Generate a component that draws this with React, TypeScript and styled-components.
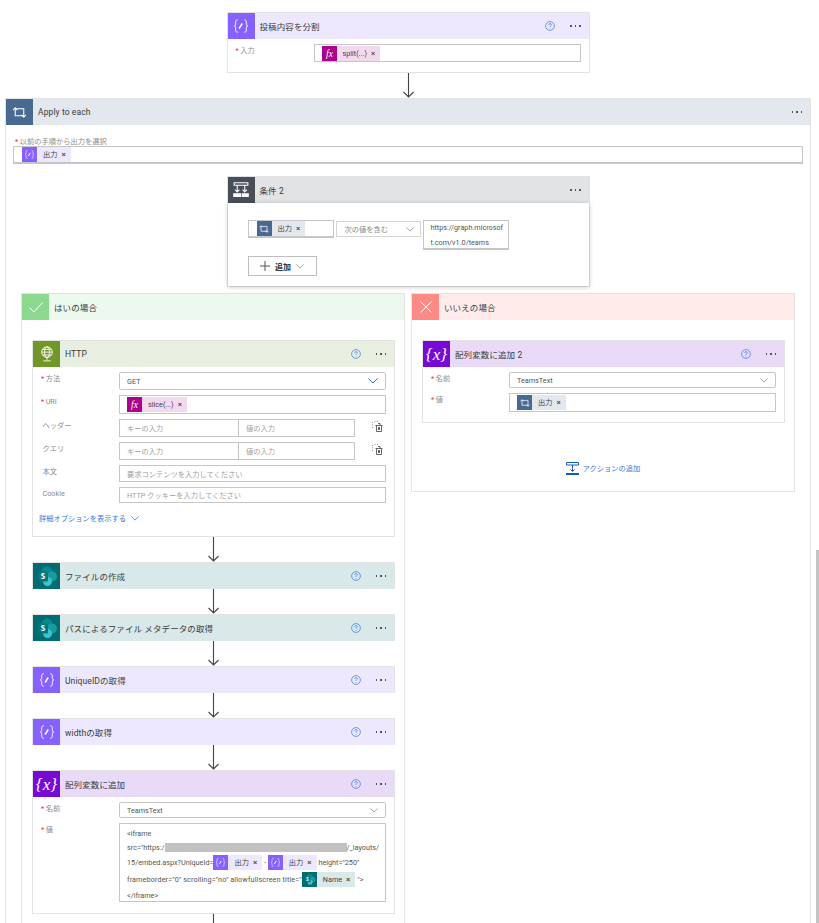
import React from "react";
import styled, { createGlobalStyle } from "styled-components";

const tones = {
  variable: { icon: "#8661ff", head: "#ede8fd" },
  loop: { icon: "#486991", head: "#e3e8ef" },
  condition: { icon: "#484f58", head: "#e2e3e4" },
  http: { icon: "#709727", head: "#e9efe0" },
  sharepoint: { icon: "#036c70", head: "#d9e8e8" },
  append: { icon: "#770bd6", head: "#e9dbf7" },
  yes: { icon: "#8ad98f", head: "#edf8ee" },
  no: { icon: "#fd8a84", head: "#ffecea" },
  fx: { icon: "#ad008c", head: "#f3d9ee" },
};
type Tone = keyof typeof tones;

const GlobalStyle = createGlobalStyle`
  html, body {
    margin: 0;
    background: #fff;
  }
  body {
    font-family: Roboto, "Noto Sans CJK JP", sans-serif;
    color: #444;
  }
`;

const Page = styled.div`
  position: relative;
  width: 819px;
  height: 923px;
  overflow: hidden;
  box-sizing: border-box;
  padding: 12px 8px 0 5px;
  filter: blur(0.35px);
`;

const Scrollbar = styled.div`
  position: absolute;
  top: 550px;
  right: 0;
  width: 3px;
  height: 373px;
  background: #c4c4c4;
`;

const Flow = styled.div`
  display: flex;
  flex-direction: column;
  align-items: center;
`;

const CardBox = styled.section<{ $wide?: boolean; $flat?: boolean }>`
  box-sizing: border-box;
  width: ${(p) => (p.$wide ? "806px" : "363px")};
  background: #fff;
  border: 1px solid #e3e3e3;
  border-bottom-width: ${(p) => (p.$flat ? "0" : "1px")};
`;

const CardHead = styled.header<{ $tone: Tone }>`
  display: flex;
  align-items: center;
  height: 26px;
  background: ${(p) => tones[p.$tone].head};
  color: #3c3c3c;
  font-size: 8.5px;
  letter-spacing: 0.1px;
`;

const IconTile = styled.div<{ $tone: Tone }>`
  display: flex;
  align-items: center;
  justify-content: center;
  flex: none;
  width: 27px;
  height: 100%;
  background: ${(p) => tones[p.$tone].icon};
  margin-right: 5px;
`;

const CardTitle = styled.span`
  flex: 1;
`;

const HelpWrap = styled.span`
  display: flex;
  margin-right: 15px;
`;

const Dots = styled.span`
  display: flex;
  gap: 3px;
  margin-right: 8px;
  i {
    width: 1.5px;
    height: 1.5px;
    background: #555;
  }
`;

const CardBody = styled.div<{ $bottom?: number }>`
  display: flex;
  flex-direction: column;
  gap: 5px;
  padding: 5px 8px ${(p) => p.$bottom ?? 10}px 8px;
`;

const Row = styled.div`
  display: grid;
  grid-template-columns: 78px minmax(0, 1fr);
  align-items: start;
`;

const Label = styled.div<{ $required?: boolean }>`
  font-size: 7.25px;
  color: #8a8a8a;
  line-height: 12px;
  padding-top: 1px;
  &::before {
    content: "${(p) => (p.$required ? "*" : "")}";
    color: #e0393e;
    margin-right: 1.5px;
  }
`;

const Field = styled.div<{ $h: number; $round?: boolean }>`
  box-sizing: border-box;
  display: flex;
  align-items: center;
  height: ${(p) => p.$h}px;
  padding: 0 7px;
  border: 1px solid #c6c6c6;
  border-radius: ${(p) => (p.$round ? "2px" : "0")};
  font-size: 7.25px;
  color: #555;
  justify-content: space-between;
`;

const TokenField = styled(Field)`
  justify-content: flex-start;
`;

const Placeholder = styled.span`
  color: #a0a0a0;
  font-size: 7.25px;
`;

const KeyValue = styled.div`
  display: grid;
  grid-template-columns: 236px 1fr;
  align-items: center;
`;

const KeyValueInputs = styled.div`
  box-sizing: border-box;
  display: grid;
  grid-template-columns: 118px 118px;
  height: 18px;
  border: 1px solid #c6c6c6;
`;

const KeyValueCell = styled.div`
  display: flex;
  align-items: center;
  padding-left: 7px;
  & + & {
    border-left: 1px solid #c6c6c6;
  }
`;

const DeleteWrap = styled.span`
  display: flex;
  justify-content: flex-end;
  padding-right: 3px;
  margin-top: -3px;
`;

const AdvancedLink = styled.div`
  display: flex;
  align-items: center;
  gap: 5px;
  margin-top: 5px;
  font-size: 7.25px;
  line-height: 11px;
  color: #3b79d8;
  margin-left: -2px;
`;

const TokenBox = styled.span<{ $tone: Tone }>`
  display: inline-flex;
  flex: none;
  align-items: center;
  height: 15px;
  background: ${(p) => tones[p.$tone].head};
  color: #444;
  font-size: 7.25px;
  line-height: 15px;
  letter-spacing: 0;
`;

const TokenIcon = styled.span<{ $tone: Tone }>`
  display: flex;
  align-items: center;
  justify-content: center;
  width: 15px;
  height: 15px;
  background: ${(p) => tones[p.$tone].icon};
  margin-right: 6px;
`;

const TokenClose = styled.span`
  margin: 0 5px 0 4px;
  font-size: 8px;
  font-weight: 700;
  color: #555;
`;

const ArrowBox = styled.div<{ $h: number }>`
  display: flex;
  flex: none;
  height: ${(p) => p.$h}px;
`;

const LoopBody = styled.div`
  display: flex;
  flex-direction: column;
  align-items: center;
  padding: 14px 7px 0;
`;

const LoopField = styled.div`
  align-self: stretch;
  margin-bottom: 12px;
`;

const LoopLabel = styled(Label)`
  line-height: 6px;
  padding: 0 0 0 2px;
  margin-bottom: 1px;
`;

const LoopInput = styled(TokenField)`
  padding: 0 8px;
  border-bottom-width: 2px;
`;

const ConditionBody = styled.div`
  position: relative;
  padding: 17px 20px 10px;
  box-shadow: 0 1px 5px rgba(0, 0, 0, 0.22);
`;

const ConditionRow = styled.div`
  display: flex;
  gap: 2px;
  align-items: flex-start;
`;

const ConditionToken = styled(TokenField)`
  width: 86px;
  padding: 0 8px;
  border-bottom-width: 2px;
`;

const Operator = styled.div`
  box-sizing: border-box;
  display: flex;
  align-items: center;
  justify-content: space-between;
  width: 85px;
  height: 16px;
  margin-top: 1px;
  padding: 0 6px 0 8px;
  border: 1px solid #d4d4d4;
  font-size: 7.25px;
  color: #888;
`;

const ValueBox = styled.div`
  box-sizing: border-box;
  width: 86px;
  height: 30px;
  padding: 0 6px 0 7px;
  border: 1px solid #c6c6c6;
  border-bottom-width: 2px;
  font-size: 7.25px;
  line-height: 14.5px;
  color: #555;
  white-space: nowrap;
`;

const AddButton = styled.button`
  display: flex;
  align-items: center;
  justify-content: center;
  box-sizing: border-box;
  gap: 5px;
  width: 69px;
  height: 20px;
  margin-top: 6px;
  padding: 0;
  background: #fff;
  border: 1px solid #bdbdbd;
  font-family: inherit;
  font-size: 8px;
  font-weight: 700;
  color: #333;
`;

const Branches = styled.div`
  display: grid;
  grid-template-columns: 384px 384px;
  gap: 6px;
  align-self: stretch;
  margin: 6px 8px 0;
  align-items: start;
`;

const Branch = styled.section`
  box-sizing: border-box;
  border: 1px solid #e3e3e3;
`;

const BranchContent = styled(Flow)`
  padding: 20px 9px 0 10px;
`;

const AddAction = styled.div`
  display: flex;
  align-items: center;
  justify-content: center;
  gap: 4px;
  height: 68px;
  box-sizing: border-box;
  padding-top: 22px;
  font-size: 7.25px;
  color: #3b79d8;
`;

const MultiField = styled.div`
  box-sizing: border-box;
  height: 79px;
  padding: 2px 7px;
  border: 1px solid #c6c6c6;
  font-size: 7.25px;
  color: #555;
`;

const CodeLine = styled.div<{ $h: number; $track?: number }>`
  display: flex;
  align-items: center;
  height: ${(p) => p.$h}px;
  letter-spacing: ${(p) => p.$track ?? 0}px;
  white-space: nowrap;
`;

const Redacted = styled.span`
  width: 182px;
  height: 9px;
  background: #c2c2c2;
  flex: none;
`;

const Variable = ({ size = 20 }: { size?: number }) => (
  <svg width={size} height={size} viewBox="0 0 32 32" fill="none" stroke="#fff" strokeWidth="1.4">
    <path d="M11 6c-2.500 0-3.500 1-3.500 3.500v3.500c0 2-1 3-2.500 3 1.500 0 2.500 1 2.500 3v3.500c0 2.500 1 3.500 3.500 3.500" />
    <path d="M21 6c2.500 0 3.500 1 3.500 3.500v3.500c0 2 1 3 2.500 3-1.500 0-2.500 1-2.500 3v3.500c0 2.500-1 3.500-3.500 3.500" />
    <path d="M13 20l5-8" strokeWidth="2.400" />
  </svg>
);

const Loop = ({ size = 17 }: { size?: number }) => (
  <svg width={size} height={size} viewBox="0 0 32 32" fill="none" stroke="#fff" strokeWidth="2">
    <path d="M8 8v14h16" />
    <path d="M4 11.500L8 7l4 4.500" />
    <path d="M24 24V9H10" />
    <path d="M20 20.500l4 4.500 4-4.500" />
  </svg>
);

const Condition = () => (
  <svg width="20" height="20" viewBox="0 0 32 32" fill="none" stroke="#fff" strokeWidth="1.700">
    <path d="M5 4.500h22v4H5zM10 8.500v10M22 8.500v10" />
    <path d="M6.500 15.500L10 19l3.500-3.500M18.500 15.500L22 19l3.500-3.500" />
    <path d="M3.500 21h13v6h-13zM17.500 21h11v6h-11z" fill="#fff" stroke="none" />
  </svg>
);

const Globe = () => (
  <svg width="20" height="20" viewBox="0 0 32 32" fill="none" stroke="#fff" strokeWidth="1.400">
    <circle cx="16" cy="13" r="8.500" />
    <ellipse cx="16" cy="13" rx="4" ry="8.500" />
    <path d="M7.500 13h17M9 8.500h14M9 17.500h14M16 22v4M10 27h12" />
  </svg>
);

const SharePoint = ({ size = 27 }: { size?: number }) => (
  <svg width={size} height={size} viewBox="0 0 27 27">
    <circle cx="14" cy="9" r="5.500" fill="#048a90" />
    <circle cx="19" cy="13.500" r="5" fill="#1a9ba1" />
    <circle cx="14.500" cy="18.500" r="4.500" fill="#37c6d0" />
    <rect x="5" y="8.500" width="10" height="10" rx="1" fill="#03787c" />
    <text x="10" y="16.200" textAnchor="middle" fontSize="8" fontWeight="700" fill="#fff" fontFamily="Open Sans">
      S
    </text>
  </svg>
);

const CurlyX = ({ size = 27 }: { size?: number }) => (
  <svg width={size} height={size} viewBox="0 0 27 27">
    <text x="13.500" y="19" textAnchor="middle" fontSize="17" fontStyle="italic" fill="#fff" fontFamily="Liberation Serif">
      {"{x}"}
    </text>
  </svg>
);

const Fx = ({ size = 15 }: { size?: number }) => (
  <svg width={size} height={size} viewBox="0 0 15 15">
    <text x="7.500" y="11" textAnchor="middle" fontSize="9.500" fontStyle="italic" fill="#fff" fontFamily="Liberation Serif">
      fx
    </text>
  </svg>
);

const Check = () => (
  <svg width="16" height="16" viewBox="0 0 16 16" fill="none" stroke="#fff" strokeWidth="1">
    <path d="M1.500 8.500L6 13 14.500 3.500" />
  </svg>
);

const Cross = () => (
  <svg width="14" height="14" viewBox="0 0 14 14" fill="none" stroke="#fff" strokeWidth="1">
    <path d="M1.500 1.500l11 11M12.500 1.500l-11 11" />
  </svg>
);

const Help = () => (
  <svg width="10" height="10" viewBox="0 0 10 10" fill="none" stroke="#4a86f0" strokeWidth="0.800">
    <circle cx="5" cy="5" r="4.400" />
    <path d="M3.600 3.900c0-.8.600-1.300 1.400-1.300s1.400.5 1.400 1.200c0 1-1.400 1-1.400 2.100M5 7v.6" />
  </svg>
);

const Chevron = ({ color = "#8a8a8a", w = 8 }: { color?: string; w?: number }) => (
  <svg width={w} height={w / 2 + 1} viewBox="0 0 10 6" fill="none" stroke={color} strokeWidth="1">
    <path d="M.5.500L5 5 9.500.500" />
  </svg>
);

const Plus = () => (
  <svg width="10" height="10" viewBox="0 0 10 10" stroke="#555" strokeWidth="1">
    <path d="M5 0v10M0 5h10" />
  </svg>
);

const DeleteRow = () => (
  <svg width="11" height="11" viewBox="0 0 11 11" fill="none" stroke="#555" strokeWidth="0.900">
    <path d="M3.500 4.500h7M4.500 4.500v6h5v-6M6 2.500h2v2M6.500 6v3M7.500 6v3" />
    <path d="M.500 1v.8M.500 3.500v.8M.500 6v.8M2.500.5h.8M5 .5h.8" strokeWidth="0.800" />
  </svg>
);

const AddActionIcon = () => (
  <svg width="13" height="13" viewBox="0 0 13 13" fill="none" stroke="#0f5fae" strokeWidth="1">
    <path d="M.500.500h12v2.500H.500zM6.500 3v6M4.500 7.500l2 2 2-2" />
    <path d="M0 11h13v2H0z" fill="#0f5fae" stroke="none" />
  </svg>
);

const Arrow = ({ h }: { h: number }) => (
  <ArrowBox $h={h}>
    <svg width="13" height={h} viewBox={`0 0 13 ${h}`} fill="none" stroke="#444" strokeWidth="1.100">
      <path d={`M6.500 0v${h - 1}M1.500 ${h - 6}l5 5 5-5`} />
    </svg>
  </ArrowBox>
);

const tokenIcons: Record<string, React.ReactNode> = {
  variable: <Variable size={13} />,
  loop: <Loop size={12} />,
  fx: <Fx />,
  sharepoint: <SharePoint size={15} />,
};

const Token = ({ tone, text }: { tone: Tone; text: string }) => (
  <TokenBox $tone={tone}>
    <TokenIcon $tone={tone}>{tokenIcons[tone]}</TokenIcon>
    {text}
    <TokenClose>×</TokenClose>
  </TokenBox>
);

type CardProps = {
  tone: Tone;
  title: string;
  icon: React.ReactNode;
  help?: boolean;
  wide?: boolean;
  children?: React.ReactNode;
};

const Card = ({ tone, title, icon, help = true, wide, children }: CardProps) => (
  <CardBox $wide={wide} $flat={!children}>
    <CardHead $tone={tone}>
      <IconTile $tone={tone}>{icon}</IconTile>
      <CardTitle>{title}</CardTitle>
      {help && (
        <HelpWrap>
          <Help />
        </HelpWrap>
      )}
      <Dots>
        <i />
        <i />
        <i />
      </Dots>
    </CardHead>
    {children}
  </CardBox>
);

const App: React.FC = () => {
  return (
    <Page>
      <GlobalStyle />
      <Flow>
        <Card tone="variable" title="投稿内容を分割" icon={<Variable />}>
          <CardBody>
            <Row>
              <Label $required>入力</Label>
              <TokenField $h={18}>
                <Token tone="fx" text="split(...)" />
              </TokenField>
            </Row>
          </CardBody>
        </Card>
        <Arrow h={25} />
        <Card tone="loop" title="Apply to each" icon={<Loop />} help={false} wide>
          <LoopBody>
            <LoopField>
              <LoopLabel $required>以前の手順から出力を選択</LoopLabel>
              <LoopInput $h={18}>
                <Token tone="variable" text="出力" />
              </LoopInput>
            </LoopField>
            <Card tone="condition" title="条件 2" icon={<Condition />} help={false}>
              <ConditionBody>
                <ConditionRow>
                  <ConditionToken $h={18}>
                    <Token tone="loop" text="出力" />
                  </ConditionToken>
                  <Operator>
                    次の値を含む
                    <Chevron />
                  </Operator>
                  <ValueBox>
                    https://graph.microsof
                    <br />
                    t.com/v1.0/teams
                  </ValueBox>
                </ConditionRow>
                <AddButton>
                  <Plus />
                  追加
                  <Chevron />
                </AddButton>
              </ConditionBody>
            </Card>
            <Branches>
              <Branch>
                <CardHead $tone="yes">
                  <IconTile $tone="yes">
                    <Check />
                  </IconTile>
                  <CardTitle>はいの場合</CardTitle>
                </CardHead>
                <BranchContent>
                  <Card tone="http" title="HTTP" icon={<Globe />}>
                    <CardBody $bottom={12}>
                      <Row>
                        <Label $required>方法</Label>
                        <Field $h={18} $round>
                          GET
                          <Chevron color="#2f6fd6" w={10} />
                        </Field>
                      </Row>
                      <Row>
                        <Label $required>URI</Label>
                        <TokenField $h={19}>
                          <Token tone="fx" text="slice(...)" />
                        </TokenField>
                      </Row>
                      {["ヘッダー", "クエリ"].map((name) => (
                        <Row key={name}>
                          <Label>{name}</Label>
                          <KeyValue>
                            <KeyValueInputs>
                              <KeyValueCell>
                                <Placeholder>キーの入力</Placeholder>
                              </KeyValueCell>
                              <KeyValueCell>
                                <Placeholder>値の入力</Placeholder>
                              </KeyValueCell>
                            </KeyValueInputs>
                            <DeleteWrap>
                              <DeleteRow />
                            </DeleteWrap>
                          </KeyValue>
                        </Row>
                      ))}
                      <Row>
                        <Label>本文</Label>
                        <Field $h={17}>
                          <Placeholder>要求コンテンツを入力してください</Placeholder>
                        </Field>
                      </Row>
                      <Row>
                        <Label>Cookie</Label>
                        <Field $h={16}>
                          <Placeholder>HTTP クッキーを入力してください</Placeholder>
                        </Field>
                      </Row>
                      <AdvancedLink>
                        詳細オプションを表示する
                        <Chevron color="#3b79d8" />
                      </AdvancedLink>
                    </CardBody>
                  </Card>
                  <Arrow h={25} />
                  <Card tone="sharepoint" title="ファイルの作成" icon={<SharePoint />} />
                  <Arrow h={25} />
                  <Card tone="sharepoint" title="パスによるファイル メタデータの取得" icon={<SharePoint />} />
                  <Arrow h={25} />
                  <Card tone="variable" title="UniqueIDの取得" icon={<Variable />} />
                  <Arrow h={25} />
                  <Card tone="variable" title="widthの取得" icon={<Variable />} />
                  <Arrow h={25} />
                  <Card tone="append" title="配列変数に追加" icon={<CurlyX />}>
                    <CardBody $bottom={11}>
                      <Row>
                        <Label $required>名前</Label>
                        <Field $h={16} $round>
                          TeamsText
                          <Chevron />
                        </Field>
                      </Row>
                      <Row>
                        <Label $required>値</Label>
                        <MultiField>
                          <CodeLine $h={14}>&lt;iframe</CodeLine>
                          <CodeLine $h={14}>
                            src="https:/
                            <Redacted />
                            /_layouts/
                          </CodeLine>
                          <CodeLine $h={17}>
                            15/embed.aspx?UniqueId=
                            <Token tone="variable" text="出力" />
                            &nbsp;-&nbsp;
                            <Token tone="variable" text="出力" />
                            &nbsp;height="250"
                          </CodeLine>
                          <CodeLine $h={17} $track={0.11}>
                            frameborder="0" scrolling="no" allowfullscreen title="
                            <Token tone="sharepoint" text="Name" />
                            &nbsp;"&gt;
                          </CodeLine>
                          <CodeLine $h={14}>&lt;/iframe&gt;</CodeLine>
                        </MultiField>
                      </Row>
                    </CardBody>
                  </Card>
                  <Arrow h={25} />
                </BranchContent>
              </Branch>
              <Branch>
                <CardHead $tone="no">
                  <IconTile $tone="no">
                    <Cross />
                  </IconTile>
                  <CardTitle>いいえの場合</CardTitle>
                </CardHead>
                <BranchContent>
                  <Card tone="append" title="配列変数に追加 2" icon={<CurlyX />}>
                    <CardBody>
                      <Row>
                        <Label $required>名前</Label>
                        <Field $h={16} $round>
                          TeamsText
                          <Chevron />
                        </Field>
                      </Row>
                      <Row>
                        <Label $required>値</Label>
                        <TokenField $h={19}>
                          <Token tone="loop" text="出力" />
                        </TokenField>
                      </Row>
                    </CardBody>
                  </Card>
                </BranchContent>
                <AddAction>
                  <AddActionIcon />
                  アクションの追加
                </AddAction>
              </Branch>
            </Branches>
          </LoopBody>
        </Card>
      </Flow>
      <Scrollbar />
    </Page>
  );
};

export default App;
